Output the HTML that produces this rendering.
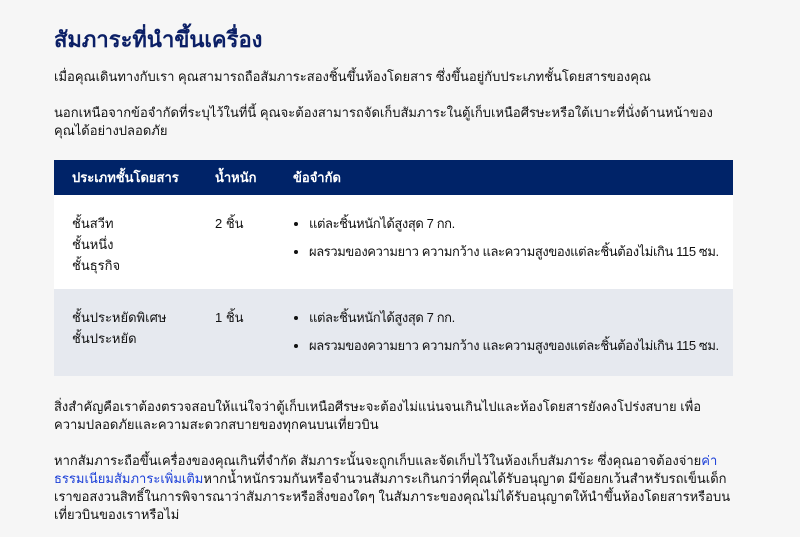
<!DOCTYPE html>
<html><head><meta charset="utf-8"><style>
body{margin:0;background:#f6f6f6;font-family:"Liberation Sans","DejaVu Sans","Noto Sans CJK SC",sans-serif;color:#111;font-size:13px;width:800px;height:537px;overflow:hidden}
.w{position:absolute;left:54px;width:690px}
h1{position:absolute;left:54px;top:22px;margin:0;font-size:22px;font-weight:bold;color:#0b1f66}
p{margin:0;line-height:18px}
table{position:absolute;left:54px;top:160px;width:679px;border-collapse:collapse}
th{background:#002368;color:#fff;text-align:left;font-weight:bold;height:35px;padding:0 0 0 18px;font-size:13px}
td{vertical-align:top;padding:18px 0 0 18px;line-height:21px}
tr.a td{background:#fff;height:76px}
tr.b td{background:#e6e9ef;height:69px}
ul{margin:0;padding-left:16px;white-space:nowrap;letter-spacing:-0.4px}
li{margin-bottom:7px}
a{color:#1b3fd8;text-decoration:none}
</style></head><body>
<h1>สัมภาระที่นำขึ้นเครื่อง</h1>
<p class="w" style="top:68px">เมื่อคุณเดินทางกับเรา คุณสามารถถือสัมภาระสองชิ้นขึ้นห้องโดยสาร ซึ่งขึ้นอยู่กับประเภทชั้นโดยสารของคุณ</p>
<p class="w" style="top:104px;width:665px">นอกเหนือจากข้อจำกัดที่ระบุไว้ในที่นี้ คุณจะต้องสามารถจัดเก็บสัมภาระในตู้เก็บเหนือศีรษะหรือใต้เบาะที่นั่งด้านหน้าของ คุณได้อย่างปลอดภัย</p>
<table>
<tr><th style="width:125px">ประเภทชั้นโดยสาร</th><th style="width:60px">น้ำหนัก</th><th>ข้อจำกัด</th></tr>
<tr class="a"><td>ชั้นสวีท<br>ชั้นหนึ่ง<br>ชั้นธุรกิจ</td><td>2 ชิ้น</td><td><ul><li>แต่ละชิ้นหนักได้สูงสุด 7 กก.</li><li>ผลรวมของความยาว ความกว้าง และความสูงของแต่ละชิ้นต้องไม่เกิน 115 ซม.</li></ul></td></tr>
<tr class="b"><td>ชั้นประหยัดพิเศษ<br>ชั้นประหยัด</td><td>1 ชิ้น</td><td><ul><li>แต่ละชิ้นหนักได้สูงสุด 7 กก.</li><li>ผลรวมของความยาว ความกว้าง และความสูงของแต่ละชิ้นต้องไม่เกิน 115 ซม.</li></ul></td></tr>
</table>
<p class="w" style="top:398px;width:665px">สิ่งสำคัญคือเราต้องตรวจสอบให้แน่ใจว่าตู้เก็บเหนือศีรษะจะต้องไม่แน่นจนเกินไปและห้องโดยสารยังคงโปร่งสบาย เพื่อความปลอดภัยและความสะดวกสบายของทุกคนบนเที่ยวบิน</p>
<p class="w" style="top:452px;width:700px">หากสัมภาระถือขึ้นเครื่องของคุณเกินที่จำกัด สัมภาระนั้นจะถูกเก็บและจัดเก็บไว้ในห้องเก็บสัมภาระ ซึ่งคุณอาจต้องจ่าย<a>ค่าธรรมเนียมสัมภาระเพิ่มเติม</a>หากน้ำหนักรวมกันหรือจำนวนสัมภาระเกินกว่าที่คุณได้รับอนุญาต มีข้อยกเว้นสำหรับรถเข็นเด็ก<br>เราขอสงวนสิทธิ์ในการพิจารณาว่าสัมภาระหรือสิ่งของใดๆ ในสัมภาระของคุณไม่ได้รับอนุญาตให้นำขึ้นห้องโดยสารหรือบน<br>เที่ยวบินของเราหรือไม่</p>
</body></html>
